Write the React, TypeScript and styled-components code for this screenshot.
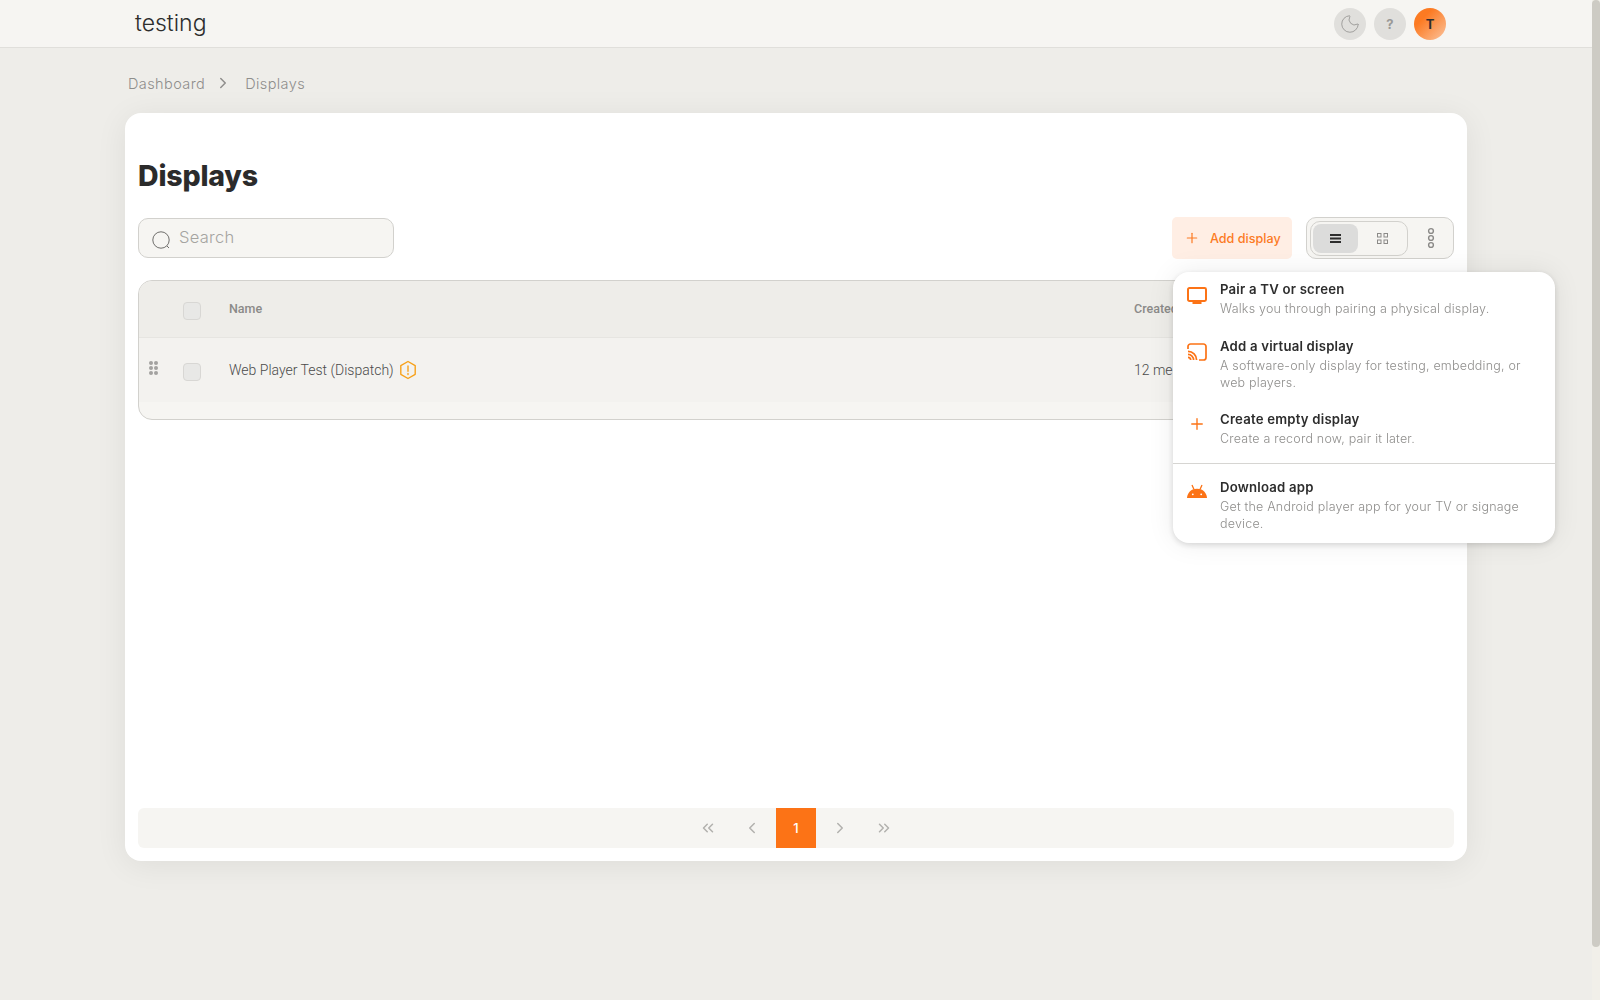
import { Plus, Moon, ChevronRight, ChevronLeft, ChevronsLeft, ChevronsRight } from 'lucide-react';
import styled, { createGlobalStyle } from 'styled-components';

const GlobalStyle = createGlobalStyle`
  html, body {
    margin: 0;
    background: #eeede9;
    font-family: Inter, 'Liberation Sans', sans-serif;
    color: #2d2d2d;
  }
  * {
    box-sizing: border-box;
  }
`;

const Page = styled.div`
  min-height: 1000px;
  padding-right: 8px;
`;

const ScrollTrack = styled.div`
  position: fixed;
  top: 0;
  right: 0;
  width: 8px;
  height: 100%;
  background: #f1efe9;
`;

const ScrollThumb = styled.div`
  height: 947px;
  background: #cdcbc4;
  border-radius: 4px;
`;

const Topbar = styled.header`
  height: 48px;
  background: #f6f5f2;
  border-bottom: 1px solid #e0dfdb;
  display: flex;
  align-items: center;
  justify-content: space-between;
  padding: 0 146px 0 135px;
`;

const Brand = styled.div`
  font-size: 23px;
  font-weight: 300;
  color: #2d2d2d;
  margin-top: -2px;
`;

const TopActions = styled.div`
  display: flex;
  gap: 8px;
`;

const RoundButton = styled.div`
  width: 32px;
  height: 32px;
  border-radius: 50%;
  background: #e0dfdc;
  color: #9a9997;
  display: flex;
  align-items: center;
  justify-content: center;
  font-size: 13px;
  font-weight: 700;
`;

const Avatar = styled(RoundButton)`
  background: linear-gradient(135deg, #fc7a22 30%, #fbc49e 100%);
  color: #2d2d2d;
`;

const Content = styled.main`
  padding: 0 125px;
  width: 1592px;
`;

const Breadcrumb = styled.nav`
  height: 65px;
  display: flex;
  align-items: center;
  padding: 5px 0 0 3px;
  font-size: 14.5px;
  font-weight: 300;
  letter-spacing: 0.4px;
  color: #8f8e8c;

  svg {
    margin: 0 13px 0 9px;
  }
`;

const Card = styled.section`
  position: relative;
  height: 748px;
  background: #fff;
  border-radius: 16px;
  padding: 46px 13px 13px;
  box-shadow: 0 4px 32px rgba(0, 0, 0, 0.07);
  display: flex;
  flex-direction: column;
`;

const Title = styled.h1`
  margin: 0;
  font-size: 28.5px;
  line-height: 34px;
  font-weight: 800;
  color: #2b2b2b;
  letter-spacing: -0.2px;
`;

const Toolbar = styled.div`
  margin-top: 24px;
  height: 42px;
  display: flex;
  align-items: center;
  justify-content: space-between;
`;

const SearchBox = styled.div`
  width: 256px;
  height: 40px;
  background: #f6f5f2;
  border: 1px solid #d2d1cd;
  border-radius: 10px;
  display: flex;
  align-items: center;
  padding: 0 0 2px 12px;
  gap: 8px;
  font-size: 16.5px;
  font-weight: 300;
  letter-spacing: 0.3px;
  color: #a5a4a1;
`;

const ToolbarRight = styled.div`
  display: flex;
  align-items: center;
  gap: 14px;
`;

const AddButton = styled.div`
  width: 120px;
  height: 42px;
  background: #ffeee4;
  border-radius: 5px;
  display: flex;
  align-items: center;
  padding-left: 12px;
  gap: 10px;
  color: #fc7a22;
  font-size: 12.6px;
  font-weight: 500;
  white-space: nowrap;
`;

const ViewControls = styled.div`
  width: 148px;
  height: 42px;
  background: #f6f5f2;
  border: 1px solid #d2d1cd;
  border-radius: 10px;
  display: flex;
  align-items: center;
  padding-left: 3px;
`;

const ViewToggle = styled.div`
  width: 98px;
  height: 35px;
  border: 1px solid #d2d1cd;
  border-radius: 10px;
  padding: 2px;
  display: flex;
`;

const ViewOption = styled.div<{ $active?: boolean }>`
  flex: 1;
  border-radius: 8px;
  background: ${p => (p.$active ? '#dcdcdb' : 'transparent')};
  display: flex;
  align-items: center;
  justify-content: center;
  margin-right: ${p => (p.$active ? '3px' : '0')};
`;

const MoreButton = styled.div`
  flex: 1;
  display: flex;
  align-items: center;
  justify-content: center;
`;

const Table = styled.div`
  margin-top: 21px;
  height: 140px;
  background: #f6f5f2;
  border: 1px solid #d2d1cd;
  border-radius: 14px;
  overflow: hidden;
  font-family: Roboto, 'Liberation Sans', sans-serif;
`;

const TableRow = styled.div<{ $head?: boolean }>`
  height: ${p => (p.$head ? '57px' : '64px')};
  background: ${p => (p.$head ? '#eeede9' : '#f3f2ef')};
  border-bottom: ${p => (p.$head ? '1px solid #e6e5e1' : 'none')};
  display: grid;
  grid-template-columns: 9px 25px 18px 28px 1fr 319px;
  align-items: center;
  padding-left: 10px;
`;

const Handle = styled.div`
  display: grid;
  grid-template-columns: 4px 4px;
  gap: 1px;
  margin-top: -4px;

  i {
    width: 4px;
    height: 4px;
    border-radius: 50%;
    background: #a3a2a0;
  }
`;

const Checkbox = styled.div`
  width: 18px;
  height: 18px;
  background: #e8e8e6;
  border: 1px solid #d8d7d4;
  border-radius: 4px;
  grid-column: 3;
  margin-top: 4px;
`;

const HeadCell = styled.div<{ $col?: number }>`
  grid-column: ${p => p.$col};
  font-size: 12.5px;
  font-weight: 500;
  color: #8b8a88;
  margin-top: -1px;
  white-space: nowrap;
`;

const NameCell = styled.div`
  grid-column: 5;
  display: flex;
  align-items: center;
  gap: 5px;
  font-size: 14px;
  font-weight: 300;
  color: #4a4a4a;
`;

const DateCell = styled.div`
  grid-column: 6;
  font-size: 14px;
  font-weight: 300;
  color: #4a4a4a;
  white-space: nowrap;
`;

const Pagination = styled.nav`
  margin-top: auto;
  height: 40px;
  background: #f6f5f2;
  border-radius: 6px;
  display: flex;
  justify-content: center;
  gap: 4px;
`;

const PageButton = styled.div<{ $active?: boolean }>`
  width: 40px;
  height: 40px;
  display: flex;
  align-items: center;
  justify-content: center;
  background: ${p => (p.$active ? '#fc7316' : 'transparent')};
  color: ${p => (p.$active ? '#fff' : '#b2b1ae')};
  font-size: 13px;
  font-weight: 500;
`;

const Menu = styled.div`
  position: absolute;
  top: 159px;
  left: 1048px;
  width: 382px;
  height: 271px;
  background: #fff;
  border-radius: 16px;
  box-shadow: 0 2px 6px rgba(0, 0, 0, 0.14), 0 0 28px rgba(0, 0, 0, 0.08);
  padding-top: 7px;
`;

const MenuItem = styled.div<{ $h: number }>`
  height: ${p => p.$h}px;
  display: grid;
  grid-template-columns: 47px 1fr;
`;

const MenuIcon = styled.div<{ $top: number }>`
  display: flex;
  justify-content: center;
  padding-top: ${p => p.$top}px;
`;

const MenuLabel = styled.div`
  font-size: 13.2px;
  line-height: 18px;
  font-weight: 600;
  letter-spacing: 0.2px;
  color: #2d2d2d;
  padding-top: 1px;
`;

const MenuHint = styled.div`
  font-size: 12.5px;
  line-height: 16.5px;
  font-weight: 300;
  letter-spacing: 0.2px;
  color: #8f8e8c;
  margin-top: 3px;
  width: 312px;
`;

const MenuDivider = styled.hr`
  margin: 0 0 13px;
  border: 0;
  border-top: 1px solid #d6d5d2;
`;

function Dots() {
  return (
    <svg width="12" height="22" viewBox="0 0 12 22" fill="none" stroke="#8b8a88" strokeWidth="1.4">
      <circle cx="6" cy="4" r="2.4" />
      <circle cx="6" cy="11" r="2.4" />
      <circle cx="6" cy="18" r="2.4" />
    </svg>
  );
}

function SearchIcon() {
  return (
    <svg width="20" height="20" viewBox="0 0 20 20" fill="none" stroke="#6f6e6c" strokeWidth="1" style={{ marginTop: 5 }}>
      <circle cx="10" cy="10" r="8.2" />
      <path d="M16 16l2 2" />
    </svg>
  );
}

function WarningHex() {
  return (
    <svg width="18" height="20" viewBox="0 0 18 20" fill="none" stroke="#f7a11a" strokeWidth="1.4">
      <path d="M9 1.5l7.2 4.2v8.6L9 18.5l-7.2-4.2V5.7z" strokeLinejoin="round" />
      <path d="M9 6v5.2M9 13.4v1.2" strokeLinecap="round" />
    </svg>
  );
}

function TvIcon() {
  return (
    <svg width="20" height="18" viewBox="0 0 20 18" fill="none">
      <rect x="1" y="1" width="18" height="13" rx="1.4" stroke="#fc7316" strokeWidth="2" />
      <rect x="5.5" y="15" width="9" height="2" fill="#fc7316" />
    </svg>
  );
}

function CastIcon() {
  return (
    <svg width="20" height="18" viewBox="0 0 20 18" fill="none" stroke="#fc7316" strokeWidth="1.7">
      <path d="M1 6V3.500A2.500 2.500 0 0 1 3.500 1h13A2.500 2.500 0 0 1 19 3.500v11a2.500 2.500 0 0 1-2.500 2.500H12" />
      <path d="M1 8.400A8.600 8.600 0 0 1 9.600 17M1 11.400A5.600 5.600 0 0 1 6.600 17M1 14.300A2.700 2.700 0 0 1 3.700 17" />
    </svg>
  );
}

function AndroidIcon() {
  return (
    <svg width="20" height="14" viewBox="0 0 20 14" fill="#fc7316">
      <path d="M0 14C.3 9.800 3.200 4.800 10 4.800S19.700 9.800 20 14z" />
      <path d="M5 1l2 4.500M15 1l-2 4.500" stroke="#fc7316" strokeWidth="1.300" />
      <circle cx="5.800" cy="10.300" r="0.9" fill="#fff" />
      <circle cx="14.200" cy="10.300" r="0.9" fill="#fff" />
    </svg>
  );
}

function ListIcon() {
  return (
    <svg width="11" height="9" viewBox="0 0 11 9" fill="#2d2d2d">
      <rect y="0" width="11" height="2" />
      <rect y="3.500" width="11" height="2" />
      <rect y="7" width="11" height="2" />
    </svg>
  );
}

function GridIcon() {
  return (
    <svg width="11" height="11" viewBox="0 0 11 11" fill="none" stroke="#8b8a88" strokeWidth="1">
      <rect x="0.5" y="0.5" width="3.500" height="3.500" />
      <rect x="7" y="0.5" width="3.500" height="3.500" />
      <rect x="0.5" y="7" width="3.500" height="3.500" />
      <rect x="7" y="7" width="3.500" height="3.500" />
    </svg>
  );
}

export default function App() {
  return (
    <Page>
      <GlobalStyle />
      <ScrollTrack>
        <ScrollThumb />
      </ScrollTrack>
      <Topbar>
        <Brand>testing</Brand>
        <TopActions>
          <RoundButton>
            <Moon size={22} strokeWidth={1} />
          </RoundButton>
          <RoundButton>?</RoundButton>
          <Avatar>T</Avatar>
        </TopActions>
      </Topbar>
      <Content>
        <Breadcrumb>
          <span>Dashboard</span>
          <ChevronRight size={18} strokeWidth={2} />
          <span>Displays</span>
        </Breadcrumb>
        <Card>
          <Title>Displays</Title>
          <Toolbar>
            <SearchBox>
              <SearchIcon />
              Search
            </SearchBox>
            <ToolbarRight>
              <AddButton>
                <Plus size={16} strokeWidth={1.8} />
                Add display
              </AddButton>
              <ViewControls>
                <ViewToggle>
                  <ViewOption $active>
                    <ListIcon />
                  </ViewOption>
                  <ViewOption>
                    <GridIcon />
                  </ViewOption>
                </ViewToggle>
                <MoreButton>
                  <Dots />
                </MoreButton>
              </ViewControls>
            </ToolbarRight>
          </Toolbar>
          <Table>
            <TableRow $head>
              <Checkbox />
              <HeadCell $col={5}>Name</HeadCell>
              <HeadCell $col={6}>Created</HeadCell>
            </TableRow>
            <TableRow>
              <Handle>
                <i /><i /><i /><i /><i /><i />
              </Handle>
              <Checkbox />
              <NameCell>
                Web Player Test (Dispatch)
                <WarningHex />
              </NameCell>
              <DateCell>12 me</DateCell>
            </TableRow>
          </Table>
          <Pagination>
            <PageButton><ChevronsLeft size={18} strokeWidth={2} /></PageButton>
            <PageButton><ChevronLeft size={18} strokeWidth={2} /></PageButton>
            <PageButton $active>1</PageButton>
            <PageButton><ChevronRight size={18} strokeWidth={2} /></PageButton>
            <PageButton><ChevronsRight size={18} strokeWidth={2} /></PageButton>
          </Pagination>
          <Menu>
            <MenuItem $h={57}>
              <MenuIcon $top={8}><TvIcon /></MenuIcon>
              <div>
                <MenuLabel>Pair a TV or screen</MenuLabel>
                <MenuHint>Walks you through pairing a physical display.</MenuHint>
              </div>
            </MenuItem>
            <MenuItem $h={73}>
              <MenuIcon $top={7}><CastIcon /></MenuIcon>
              <div>
                <MenuLabel>Add a virtual display</MenuLabel>
                <MenuHint>A software-only display for testing, embedding, or web players.</MenuHint>
              </div>
            </MenuItem>
            <MenuItem $h={54}>
              <MenuIcon $top={6}><Plus size={18} strokeWidth={1.8} color="#fc7316" /></MenuIcon>
              <div>
                <MenuLabel>Create empty display</MenuLabel>
                <MenuHint>Create a record now, pair it later.</MenuHint>
              </div>
            </MenuItem>
            <MenuDivider />
            <MenuItem $h={60}>
              <MenuIcon $top={7}><AndroidIcon /></MenuIcon>
              <div>
                <MenuLabel>Download app</MenuLabel>
                <MenuHint>Get the Android player app for your TV or signage device.</MenuHint>
              </div>
            </MenuItem>
          </Menu>
        </Card>
      </Content>
    </Page>
  );
}
